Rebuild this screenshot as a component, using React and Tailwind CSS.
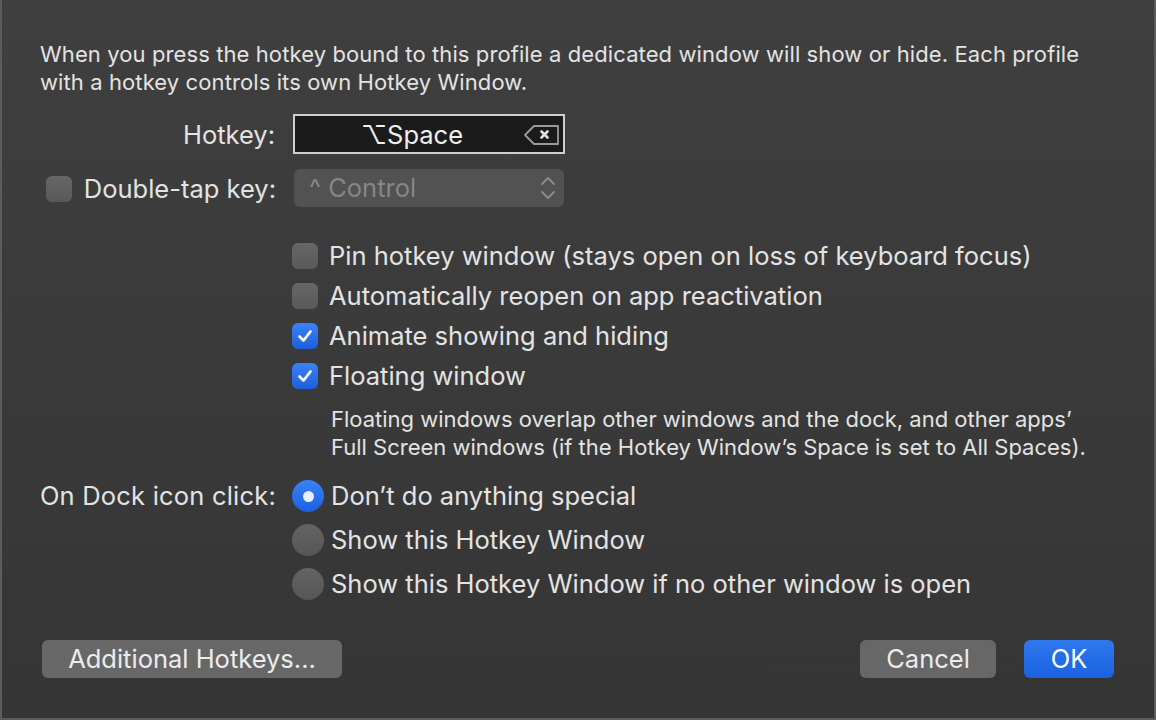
import React from "react";

const font = { fontFamily: "Inter, 'Noto Sans', sans-serif" };

function Check({ checked }) {
  return checked ? (
    <div className="w-[26px] h-[26px] rounded-[6px] bg-gradient-to-b from-[#3a82f7] to-[#1d5fdc] flex items-center justify-center shrink-0">
      <svg width="18" height="18" viewBox="0 0 18 18">
        <path d="M3.5 9.5 L7.5 13.5 L14.5 4.5" fill="none" stroke="white" strokeWidth="2.6" strokeLinecap="round" strokeLinejoin="round" />
      </svg>
    </div>
  ) : (
    <div className="w-[26px] h-[26px] rounded-[6px] bg-gradient-to-b from-[#666666] to-[#595959] shrink-0" />
  );
}

function Radio({ on }) {
  return on ? (
    <div className="w-[32px] h-[32px] rounded-full bg-gradient-to-b from-[#3a82f7] to-[#1d5fdc] flex items-center justify-center shrink-0">
      <div className="w-[11px] h-[11px] rounded-full bg-[#e8eefc]" />
    </div>
  ) : (
    <div className="w-[32px] h-[32px] rounded-full bg-gradient-to-b from-[#636363] to-[#565656] shrink-0" />
  );
}

export default function App() {
  return (
    <div
      style={font}
      className="w-[1156px] h-[720px] bg-gradient-to-b from-[#3f3f3f] to-[#353535] border-l-2 border-r-2 border-b-2 border-[#5c5c5c] text-[#e3e3e3] flex flex-col overflow-hidden"
    >
      <div className="pt-[40px] pl-[38px] pr-[10px] text-[22px] leading-[28px] whitespace-nowrap tracking-[0.1px]">
        When you press the hotkey bound to this profile a dedicated window will show or hide. Each profile
        <br />
        with a hotkey controls its own Hotkey Window.
      </div>

      <div className="flex items-center mt-[18px] h-[40px]">
        <div className="w-[291px] text-right text-[25.5px] pr-[18px] pt-[3px]">Hotkey:</div>
        <div className="w-[272px] h-[40px] bg-[#1b1b1b] border-2 border-[#cfcfcf] flex items-center relative">
          <div className="flex-1 text-center text-[25.5px] text-[#efefef] pr-[40px] pl-[6px] pt-[2px]">⌥Space</div>
          <svg className="absolute right-[2px] top-[7px]" width="38" height="24" viewBox="0 0 38 24">
            <path d="M2 12 L11 3 H35 V21 H11 Z" fill="none" stroke="#9a9a9a" strokeWidth="1.8" strokeLinejoin="round" />
            <path d="M18.5 8.5 L24.5 14.5 M24.5 8.5 L18.5 14.5" stroke="#e0e0e0" strokeWidth="2.6" strokeLinecap="round" />
          </svg>
        </div>
      </div>

      <div className="flex items-center mt-[15px] h-[38px]">
        <div className="w-[292px] flex items-center pl-[44px] pr-[18px]">
          <div className="pt-[2px]"><Check /></div>
          <div className="flex-1 text-right text-[25.5px] whitespace-nowrap pt-[3px]">Double-tap key:</div>
        </div>
        <div className="w-[270px] h-[38px] rounded-[6px] bg-[#525252] flex items-center pl-[15px] pr-[8px] text-[25.5px] text-[#868686]">
          <span className="flex-1 pt-[1px]">^ Control</span>
          <svg width="16" height="28" viewBox="0 0 16 28">
            <path d="M2 10 L8 4 L14 10 M2 18 L8 24 L14 18" fill="none" stroke="#8a8a8a" strokeWidth="2" strokeLinecap="round" strokeLinejoin="round" />
          </svg>
        </div>
      </div>

      <div className="flex flex-col pl-[290px] mt-[36px] gap-[14px] text-[25.5px]">
        {[
          ["Pin hotkey window (stays open on loss of keyboard focus)", false],
          ["Automatically reopen on app reactivation", false],
          ["Animate showing and hiding", true],
          ["Floating window", true],
        ].map(([t, c]) => (
          <div key={t} className="flex items-center gap-[11px] h-[26px] whitespace-nowrap">
            <Check checked={c} />
            <span>{t}</span>
          </div>
        ))}
      </div>

      <div className="pl-[329px] mt-[16px] text-[22px] leading-[28px] whitespace-nowrap">
        Floating windows overlap other windows and the dock, and other apps’
        <br />
        Full Screen windows (if the Hotkey Window’s Space is set to All Spaces).
      </div>

      <div className="flex mt-[19px]">
        <div className="w-[290px] text-right text-[25.5px] pr-[16px] h-[32px] flex items-center justify-end whitespace-nowrap tracking-[0.2px]">On Dock icon click:</div>
        <div className="flex flex-col gap-[12px] text-[25.5px]">
          {[
            ["Don’t do anything special", true],
            ["Show this Hotkey Window", false],
            ["Show this Hotkey Window if no other window is open", false],
          ].map(([t, on]) => (
            <div key={t} className="flex items-center gap-[7px] h-[32px] whitespace-nowrap">
              <Radio on={on} />
              <span>{t}</span>
            </div>
          ))}
        </div>
      </div>

      <div className="flex items-center mt-[40px] pl-[40px] pr-[40px]">
        <div className="w-[300px] h-[38px] rounded-[6px] bg-[#676767] flex items-center justify-center text-[25.5px] text-[#ececec]">Additional Hotkeys...</div>
        <div className="flex-1" />
        <div className="w-[136px] h-[38px] rounded-[6px] bg-[#676767] flex items-center justify-center text-[25.5px] text-[#ececec]">Cancel</div>
        <div className="w-[90px] h-[38px] rounded-[6px] bg-gradient-to-b from-[#2f78ee] to-[#1a62e0] flex items-center justify-center text-[25.5px] text-white ml-[28px]">OK</div>
      </div>
    </div>
  );
}
